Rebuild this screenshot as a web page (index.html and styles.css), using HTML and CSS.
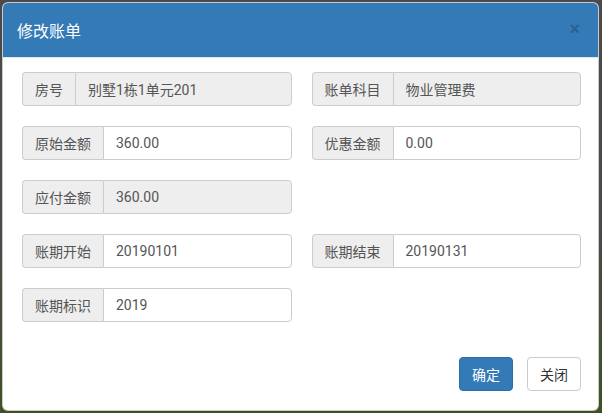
FILE: index.html
```html
<!DOCTYPE html>
<html lang="zh-CN">
<head>
  <meta charset="UTF-8">
  <meta name="viewport" content="width=device-width, initial-scale=1.0">
  <title>修改账单</title>
  <link rel="stylesheet" href="styles.css">
</head>
<body>
  <div class="modal">
    <div class="modal-header">
      <h4 class="modal-title">修改账单</h4>
      <button class="close" type="button">&times;</button>
    </div>

    <div class="modal-body">
      <div class="input-group">
        <span class="addon">房号</span>
        <input class="field" type="text" value="别墅1栋1单元201" readonly>
      </div>
      <div class="input-group">
        <span class="addon">账单科目</span>
        <input class="field" type="text" value="物业管理费" readonly>
      </div>

      <div class="input-group">
        <span class="addon">原始金额</span>
        <input class="field" type="text" value="360.00">
      </div>
      <div class="input-group">
        <span class="addon">优惠金额</span>
        <input class="field" type="text" value="0.00">
      </div>

      <div class="input-group">
        <span class="addon">应付金额</span>
        <input class="field" type="text" value="360.00" readonly>
      </div>
      <div></div>

      <div class="input-group">
        <span class="addon">账期开始</span>
        <input class="field" type="text" value="20190101">
      </div>
      <div class="input-group">
        <span class="addon">账期结束</span>
        <input class="field" type="text" value="20190131">
      </div>

      <div class="input-group">
        <span class="addon">账期标识</span>
        <input class="field" type="text" value="2019">
      </div>
    </div>

    <div class="modal-footer">
      <button class="btn btn-primary" type="button">确定</button>
      <button class="btn btn-default" type="button">关闭</button>
    </div>
  </div>
</body>
</html>
```

FILE: styles.css
```css
* {
  box-sizing: border-box;
}

body {
  margin: 0;
  padding: 2px 3px 2px 2px;
  height: 413px;
  overflow: hidden;
  font-family: Roboto, "Noto Sans CJK SC", sans-serif;
  font-size: 14px;
  color: #555;
  background: linear-gradient(to bottom, #4a4a4a 0%, #4a4a4a 55%, #3f5224 100%);
}

.modal {
  height: 409px;
  background: #fff;
  border: 1px solid rgba(0,0,0,0.2);
  border-radius: 6px;
  overflow: hidden;
  display: flex;
  flex-direction: column;
}

.modal-header {
  display: flex;
  align-items: center;
  justify-content: space-between;
  height: 55px;
  padding: 0 18px 0 14px;
  background: #337ab7;
  border-bottom: 1px solid #e5e5e5;
}

.modal-title {
  margin: 0;
  font-size: 16px;
  font-weight: 400;
  color: #fff;
}

.close {
  padding: 0;
  border: none;
  background: transparent;
  font-family: "Liberation Sans", sans-serif;
  font-size: 18px;
  font-weight: bold;
  line-height: 1;
  color: #000;
  opacity: 0.2;
  cursor: pointer;
  margin-top: -2px;
}

.modal-body {
  display: grid;
  grid-template-columns: minmax(0, 1fr) minmax(0, 1fr);
  column-gap: 20px;
  row-gap: 20px;
  padding: 14px 17px 0 19px;
}

.input-group {
  display: flex;
  height: 34px;
}

.addon {
  display: flex;
  align-items: center;
  padding: 0 12px;
  background: #eee;
  border: 1px solid #ccc;
  border-right: none;
  border-radius: 4px 0 0 4px;
  white-space: nowrap;
}

.field {
  flex: 1;
  width: 0;
  min-width: 0;
  height: 34px;
  padding: 0 12px;
  border: 1px solid #ccc;
  border-radius: 0 4px 4px 0;
  font: inherit;
  color: #555;
  background: #fff;
  outline: none;
}

.field[readonly] {
  background: #eee;
}

.modal-footer {
  display: flex;
  justify-content: flex-end;
  gap: 14px;
  margin-top: auto;
  padding: 0 17px 19px 0;
}

.btn {
  width: 54px;
  height: 34px;
  border-radius: 4px;
  font: inherit;
  font-size: 14px;
  cursor: pointer;
}

.btn-primary {
  background: #337ab7;
  border: 1px solid #2e6da4;
  color: #fff;
}

.btn-default {
  background: #fff;
  border: 1px solid #ccc;
  color: #333;
}
```
